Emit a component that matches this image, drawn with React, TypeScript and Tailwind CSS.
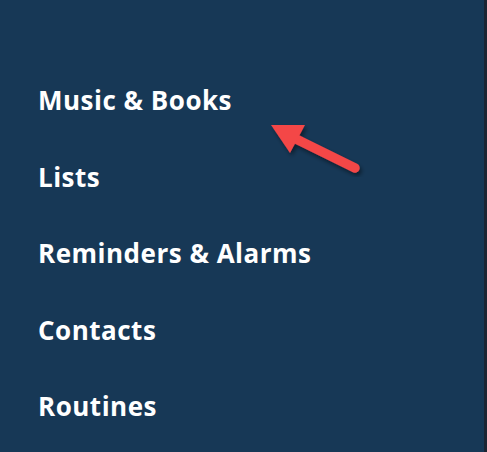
export default function App() {
  const items = ['Music & Books', 'Lists', 'Reminders & Alarms', 'Contacts', 'Routines'];

  return (
    <div className="flex w-[487px] h-[452px] overflow-hidden">
      <div className="relative flex-1 bg-[#173856]">
        <ul className="flex flex-col gap-[40.5px] pt-[82px] pl-[38px]">
          {items.map((item) => (
            <li
              key={item}
              className="text-[26px] leading-[36px] font-bold tracking-[0.5px] text-white"
              style={{ fontFamily: '"Open Sans", "Noto Sans", sans-serif' }}
            >
              {item}
            </li>
          ))}
        </ul>

        {/* annotation arrow */}
        <svg
          className="absolute left-0 top-0 pointer-events-none"
          width="484"
          height="452"
          viewBox="0 0 484 452"
        >
          <defs>
            <filter id="shadow" x="-20%" y="-20%" width="140%" height="140%">
              <feDropShadow dx="2" dy="3" stdDeviation="2" floodColor="#000" floodOpacity="0.45" />
            </filter>
          </defs>
          <g filter="url(#shadow)">
            <line x1="355" y1="168" x2="290" y2="136" stroke="#f44646" strokeWidth="9.5" strokeLinecap="round" />
            <polygon points="271,125 305,125 290,153" fill="#f44646" />
          </g>
        </svg>
      </div>
      <div className="w-[3px] bg-[#1c2533]" />
    </div>
  );
}
